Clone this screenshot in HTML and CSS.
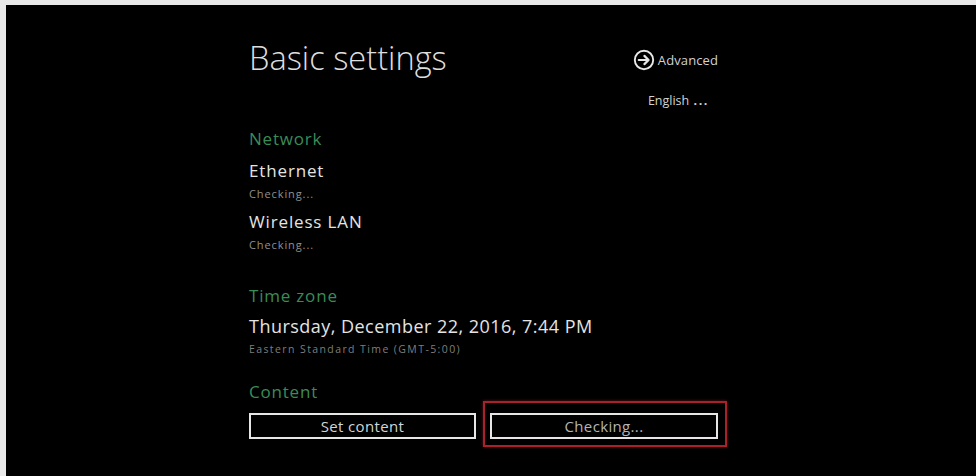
FILE: index.html
```html
<!DOCTYPE html>
<html>
<head>
<meta charset="utf-8">
<link rel="stylesheet" href="styles.css">
</head>
<body>
<div class="screen">
  <div class="panel">
    <div class="header">
      <h1 class="title">Basic settings</h1>
      <div class="side">
        <div class="advanced">
          <svg class="adv-icon" width="22" height="22" viewBox="0 0 22 22">
            <circle cx="11" cy="11" r="9.2" fill="none" stroke="#e8e8e8" stroke-width="1.9"/>
            <path d="M5.8 11 H15.6 M11.4 6.9 L15.6 11 L11.4 15.1" fill="none" stroke="#e8e8e8" stroke-width="2.2" stroke-linecap="round" stroke-linejoin="round"/>
          </svg>
          <span>Advanced</span>
        </div>
        <div class="lang">English <span class="dots">...</span></div>
      </div>
    </div>

    <div class="label first">Network</div>
    <div class="item">Ethernet</div>
    <div class="sub">Checking...</div>
    <div class="item next">Wireless LAN</div>
    <div class="sub">Checking...</div>

    <div class="label tz">Time zone</div>
    <div class="item big">Thursday, December 22, 2016, 7:44 PM</div>
    <div class="sub small">Eastern Standard Time (GMT-5:00)</div>

    <div class="label content">Content</div>
    <div class="buttons">
      <div class="btn">Set content</div>
      <div class="btn highlighted">Checking...</div>
    </div>
  </div>
</div>
</body>
</html>
```
FILE: styles.css
```css
html, body {
  margin: 0;
  padding: 0;
  height: 100%;
}
body {
  background: #e9e9e9;
  font-family: "Open Sans", "Noto Sans", sans-serif;
  overflow: hidden;
}
.screen {
  margin: 5px 0 0 6px;
  height: 471px;
  background: #000;
  color: #e6e6e6;
}
.panel {
  width: 469px;
  margin-left: 243px;
  padding-top: 33px;
  display: flex;
  flex-direction: column;
}
.header {
  display: flex;
  justify-content: space-between;
  align-items: flex-start;
}
.title {
  margin: 0;
  font-weight: 300;
  font-size: 32.6px;
  line-height: 40px;
  color: #dedede;
}
.side {
  display: flex;
  flex-direction: column;
  align-items: flex-end;
  padding-top: 11px;
}
.advanced {
  display: flex;
  align-items: center;
  gap: 3px;
  height: 22px;
  font-size: 13px;
  color: #d2d2d2;
  letter-spacing: 0.1px;
}
.adv-icon {
  display: block;
}
.lang {
  margin-top: 22px;
  margin-right: 9px;
  font-size: 12.5px;
  line-height: 16px;
  color: #d2d2d2;
}
.dots {
  font-weight: 700;
  letter-spacing: 1.6px;
  margin-left: 1px;
}
.label {
  font-size: 17px;
  line-height: 22px;
  letter-spacing: 0.8px;
  color: #3a8c57;
}
.label.first { margin-top: 19px; }
.label.tz { margin-top: 33px; }
.label.content { margin-top: 25px; }
.item {
  margin-top: 10px;
  font-size: 17px;
  line-height: 22px;
  letter-spacing: 0.85px;
  color: #e4e4e4;
}
.item.big {
  margin-top: 7px;
  font-size: 18px;
  line-height: 24px;
  letter-spacing: 0.47px;
}
.sub {
  margin-top: 5px;
  font-size: 11px;
  line-height: 14px;
  color: #909090;
  letter-spacing: 0.9px;
}
.sub.small {
  margin-top: 4px;
  font-size: 10.5px;
  color: #7e7e7e;
  letter-spacing: 1.4px;
}
.buttons {
  margin-top: 10px;
  display: flex;
  gap: 14px;
}
.btn {
  position: relative;
  box-sizing: border-box;
  width: 227px;
  height: 26px;
  border: 2px solid #e6e6e6;
  display: flex;
  align-items: center;
  justify-content: center;
  font-size: 15px;
  letter-spacing: 0.35px;
  color: #d4d4d4;
}
.btn.highlighted {
  width: 228px;
  color: #b4b4b4;
}
.btn.highlighted::after {
  content: "";
  position: absolute;
  top: -14px;
  left: -9px;
  right: -11px;
  bottom: -10px;
  border: 2px solid #a8212b;
  box-shadow: 0 0 3px rgba(168, 33, 43, 0.6);
}
```
